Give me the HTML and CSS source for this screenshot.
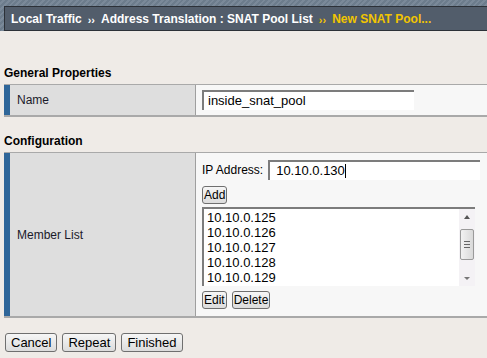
FILE: index.html
```html
<!DOCTYPE html>
<html lang="en">
<head>
    <meta charset="UTF-8">
    <title>New SNAT Pool</title>
    <link rel="stylesheet" href="styles.css">
</head>
<body>
    <div class="topbar">
        <div class="crumbs">
            <span>Local Traffic</span>
            <span class="sep">&rsaquo;&rsaquo;</span>
            <span>Address Translation : SNAT Pool List</span>
            <span class="sep current">&rsaquo;&rsaquo;</span>
            <span class="current">New SNAT Pool...</span>
        </div>
    </div>

    <div class="section-title first">General Properties</div>
    <div class="row">
        <div class="label">Name</div>
        <div class="value name-value">
            <div class="textbox name-box">inside_snat_pool</div>
        </div>
    </div>

    <div class="section-title">Configuration</div>
    <div class="row">
        <div class="label">Member List</div>
        <div class="value member-value">
            <div class="ip-line">
                <span>IP Address:</span>
                <div class="textbox ip-box">10.10.0.130<span class="caret"></span></div>
            </div>
            <div><button type="button" class="btn small">Add</button></div>
            <div class="listbox">
                <div class="items">
                    <div>10.10.0.125</div>
                    <div>10.10.0.126</div>
                    <div>10.10.0.127</div>
                    <div>10.10.0.128</div>
                    <div>10.10.0.129</div>
                </div>
                <div class="scrollbar">
                    <div class="arrow up"></div>
                    <div class="track">
                        <div class="thumb"><i></i><i></i><i></i></div>
                    </div>
                    <div class="arrow down"></div>
                </div>
            </div>
            <div class="btn-line">
                <button type="button" class="btn small">Edit</button>
                <button type="button" class="btn small">Delete</button>
            </div>
        </div>
    </div>

    <div class="actions">
        <button type="button" class="btn">Cancel</button>
        <button type="button" class="btn">Repeat</button>
        <button type="button" class="btn">Finished</button>
    </div>
</body>
</html>
```

FILE: styles.css
```css
body {
    margin: 0;
    background-color: #efebe7;
    font-family: "Liberation Sans", Arial, sans-serif;
    font-size: 12px;
    color: #000;
}
.topbar {
    padding: 6px 0 0 4px;
    background: repeating-linear-gradient(135deg, #6c7c8c 0 2px, #7a8999 2px 4px);
}
.crumbs {
    height: 23px;
    display: flex;
    align-items: center;
    gap: 5px;
    padding-left: 6px;
    background-color: #525d6b;
    border: 1px solid #2c3138;
    border-right: none;
    color: #fff;
    font-weight: bold;
    font-size: 12px;
}
.crumbs .sep {
    font-size: 11px;
    padding: 2px 1px 0;
}
.crumbs .current {
    color: #f2c500;
}
.section-title {
    font-weight: bold;
    padding: 0 0 4px 4px;
    line-height: 14px;
    margin-top: 17px;
}
.section-title.first {
    margin-top: 35px;
}
.row {
    display: flex;
    margin-left: 4px;
    border-top: 1px solid #a9a9a9;
    border-bottom: 2px solid #a9a9a9;
}
.label {
    width: 178px;
    padding-left: 7px;
    display: flex;
    align-items: center;
    background-color: #dedede;
    border-left: 6px solid #2f6699;
    border-right: 1px solid #9f9f9f;
    color: #1a1a2a;
}
.value {
    flex: 1;
    background-color: #f7f7f7;
    padding-left: 6px;
}
.name-value {
    padding-top: 5px;
    padding-bottom: 5px;
}
.textbox {
    height: 18px;
    line-height: 18px;
    background-color: #fff;
    border-top: 2px solid #7c7c7c;
    border-left: 2px solid #7c7c7c;
    padding-left: 4px;
    box-sizing: content-box;
}
.name-box {
    width: 206px;
    font-size: 13px;
}
.member-value {
    padding-top: 7px;
    padding-bottom: 7px;
}
.ip-line {
    display: flex;
    align-items: center;
    gap: 5px;
}
.ip-box {
    width: 204px;
    padding-left: 6px;
    font-size: 13px;
}
.caret {
    display: inline-block;
    width: 1px;
    height: 14px;
    background-color: #000;
    vertical-align: -3px;
}
.btn {
    font-family: "Liberation Sans", Arial, sans-serif;
    font-size: 13px;
    height: 19px;
    padding: 0 5px;
    border: 1px solid #6f6f6f;
    border-radius: 3px;
    background: linear-gradient(#f6f6f6, #dcdcdc);
    color: #000;
    cursor: pointer;
}
.btn.small {
    height: 18px;
    padding: 0 1px;
    font-size: 12px;
    margin-top: 6px;
}
.btn-line {
    display: flex;
    gap: 5px;
}
.btn-line .btn {
    margin-top: 5px;
}
.listbox {
    display: flex;
    margin-top: 3px;
    margin-right: 12px;
    height: 79px;
    background-color: #fff;
    border-top: 2px solid #7c7c7c;
    border-left: 2px solid #7c7c7c;
    box-sizing: border-box;
}
.items {
    flex: 1;
    padding: 1px 0 0 3px;
    font-size: 13px;
    line-height: 15px;
}
.scrollbar {
    width: 16px;
    display: flex;
    flex-direction: column;
    background-color: #f4f2f5;
}
.arrow {
    height: 16px;
    display: flex;
    align-items: center;
    justify-content: center;
}
.arrow.up::after {
    content: "";
    border: 3px solid transparent;
    border-bottom: 4px solid #555;
    border-top: none;
}
.arrow.down::after {
    content: "";
    border: 3px solid transparent;
    border-top: 3px solid #777;
    border-bottom: none;
}
.track {
    flex: 1;
    padding-top: 4px;
}
.thumb {
    height: 31px;
    margin: 0 1px;
    border: 1px solid #9a9a9a;
    border-radius: 2px;
    background: linear-gradient(90deg, #f2f2f2, #d9d9d9);
    display: flex;
    flex-direction: column;
    align-items: center;
    justify-content: center;
    gap: 2px;
    box-sizing: border-box;
}
.thumb i {
    display: block;
    width: 6px;
    height: 1px;
    background-color: #666;
}
.actions {
    display: flex;
    gap: 5px;
    padding: 15px 0 0 5px;
}
```
